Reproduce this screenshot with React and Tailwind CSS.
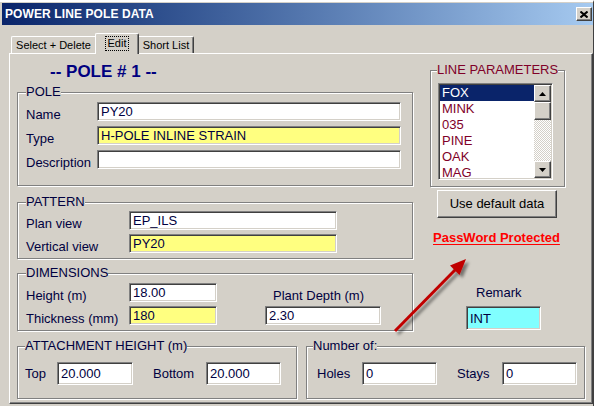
import React from 'react';

const SUNKEN =
  'border border-t-[#808080] border-l-[#808080] border-r-white border-b-white shadow-[inset_1px_1px_0_#404040,inset_-1px_-1px_0_#d4d0c8]';
const RAISED =
  'border border-t-white border-l-white border-r-[#404040] border-b-[#404040] shadow-[inset_-1px_-1px_0_#808080,inset_1px_1px_0_#d4d0c8]';

function Field({ value, w, h = 'h-[19px]', bg = 'bg-white' }) {
  return (
    <div
      className={`${w} ${h} ${bg} ${SUNKEN} box-border pl-[3px] text-[13px] leading-[15px] text-[#000040] whitespace-nowrap overflow-hidden flex items-center`}
    >
      {value}
    </div>
  );
}

function Group({ title, className, legend = 'text-[#000040]', children }) {
  return (
    <fieldset
      className={`box-border border border-[#808080] shadow-[inset_1px_1px_0_#fff,1px_1px_0_#fff] ${className}`}
    >
      <legend className={`bg-[#d4d0c8] text-[13px] leading-[14px] ${legend}`}>{title}</legend>
      {children}
    </fieldset>
  );
}

function Label({ children, w }) {
  return <div className={`${w} shrink-0 text-[13px] leading-[15px] text-[#000040] pt-[5px]`}>{children}</div>;
}

function Arrow({ up }) {
  return (
    <div className={`w-[17px] h-[17px] bg-[#d4d0c8] ${RAISED} box-border flex items-center justify-center`}>
      <svg width="7" height="4" viewBox="0 0 7 4">
        {up ? <polygon points="3.5,0 7,4 0,4" fill="#000" /> : <polygon points="0,0 7,0 3.5,4" fill="#000" />}
      </svg>
    </div>
  );
}

const LINES = ['FOX', 'MINK', '035', 'PINE', 'OAK', 'MAG'];

export default function App() {
  return (
    <div className="relative w-[594px] h-[406px] overflow-hidden bg-[#d4d0c8] font-['Liberation_Sans',Arial,sans-serif] border-t-2 border-t-white border-r border-r-[#404040] box-border">
      {/* title bar */}
      <div className="ml-[2px] mt-[1px] h-[22px] flex items-center justify-between bg-linear-to-r from-[#0a246a] to-[#a6caf0]">
        <span className="pl-[3px] text-[12px] font-bold text-white tracking-[0.1px]">POWER LINE POLE DATA</span>
        <div className={`mr-[1px] w-[16px] h-[14px] bg-[#d4d0c8] ${RAISED} box-border flex items-center justify-center`}>
          <svg width="8" height="7" viewBox="0 0 8 7">
            <path d="M0.5 0.5 L7.5 6.5 M7.5 0.5 L0.5 6.5" stroke="#000" strokeWidth="2" />
          </svg>
        </div>
      </div>

      {/* tabs */}
      <div className="h-[28px] flex items-end pl-[11px] text-[11px] text-black">
        <div className="w-[84px] h-[17px] box-border border-t border-l border-t-white border-l-white rounded-tl-[2px] flex items-center justify-center">
          Select + Delete
        </div>
        <div className="relative z-10 w-[44px] h-[21px] -mb-[1px] box-border border-t border-l border-r border-t-white border-l-white border-r-[#404040] rounded-t-[2px] bg-[#d4d0c8] shadow-[inset_-1px_0_0_#808080] flex items-start justify-center pt-[2px]">
          <span className="px-[2px] h-[15px] leading-[13px] border border-dotted border-black">Edit</span>
        </div>
        <div className="w-[55px] h-[17px] box-border border-t border-r border-t-white border-r-[#404040] rounded-tr-[2px] shadow-[inset_-1px_0_0_#808080] flex items-center justify-center">
          Short List
        </div>
      </div>

      {/* panel */}
      <div className="ml-[9px] w-[584px] h-[351px] box-border border-t border-l border-t-white border-l-white border-r border-b border-r-[#404040] border-b-[#404040] shadow-[inset_-1px_-1px_0_#808080] pl-[7px]">
        <div className="flex">
          {/* left column */}
          <div className="w-[396px]">
            <div className="mt-[8px] h-[20px] leading-[20px] pl-[33px] text-[17px] font-bold text-[#000080]">-- POLE # 1 --</div>

            <Group title="POLE" className="mt-[3px] h-[101px] pl-[8px]">
              <div className="pt-[3px] flex flex-col gap-[5px]">
                {[
                  ['Name', 'PY20', 'bg-white'],
                  ['Type', 'H-POLE INLINE STRAIN', 'bg-[#ffff80]'],
                  ['Description', '', 'bg-white'],
                ].map(([l, v, bg]) => (
                  <div key={l} className="flex h-[19px]">
                    <Label w="w-[71px]">{l}</Label>
                    <Field value={v} w="w-[304px]" bg={bg} />
                  </div>
                ))}
              </div>
            </Group>

            <Group title="PATTERN" className="mt-[9px] h-[64px] pl-[8px]">
              <div className="pt-[2px] flex flex-col gap-[4px]">
                <div className="flex h-[19px]">
                  <Label w="w-[103px]">Plan view</Label>
                  <Field value="EP_ILS" w="w-[208px]" />
                </div>
                <div className="flex h-[19px]">
                  <Label w="w-[103px]">Vertical view</Label>
                  <Field value="PY20" w="w-[208px]" bg="bg-[#ffff80]" />
                </div>
              </div>
            </Group>

            <Group title="DIMENSIONS" className="mt-[7px] h-[65px] pl-[8px]">
              <div className="pt-[3px] flex">
                <div className="flex flex-col gap-[4px]">
                  <div className="flex h-[19px]">
                    <Label w="w-[103px]">Height (m)</Label>
                    <Field value="18.00" w="w-[88px]" />
                  </div>
                  <div className="flex h-[19px]">
                    <Label w="w-[103px]">Thickness (mm)</Label>
                    <Field value="180" w="w-[88px]" bg="bg-[#ffff80]" />
                  </div>
                </div>
                <div className="ml-[48px] flex flex-col gap-[4px]">
                  <div className="h-[19px] pl-[8px]">
                    <Label w="w-[110px]">Plant Depth (m)</Label>
                  </div>
                  <Field value="2.30" w="w-[116px]" />
                </div>
              </div>
            </Group>
          </div>

          {/* right column */}
          <div className="ml-[17px] w-[135px]">
            <Group title="LINE PARAMETERS" className="mt-[9px] h-[124px] pl-[7px]" legend="text-[#800028] -ml-[1px]">
              <div className="pt-[6px]">
                <div className={`w-[115px] h-[97px] box-border ${SUNKEN} bg-white flex`}>
                  <div className="flex-1 pt-px pl-px overflow-hidden">
                    {LINES.map((l, i) => (
                      <div
                        key={l}
                        className={`h-[16px] leading-[16px] pl-[2px] text-[13px] ${i === 0 ? 'bg-[#0a246a] text-white' : 'text-[#800028]'}`}
                      >
                        {l}
                      </div>
                    ))}
                  </div>
                  <div className="w-[17px] my-px mr-px flex flex-col bg-[image:repeating-conic-gradient(#d4d0c8_0_25%,#fff_0_50%)] bg-size-[2px_2px]">
                    <Arrow up />
                    <div className={`h-[18px] bg-[#d4d0c8] ${RAISED} box-border`} />
                    <div className="flex-1" />
                    <Arrow />
                  </div>
                </div>
              </div>
            </Group>

            <div className={`mt-[3px] ml-[7px] w-[120px] h-[28px] box-border ${RAISED} flex items-center justify-center text-[13px] text-black`}>
              Use default data
            </div>

            <div className="mt-[12px] ml-[3px] h-[16px] leading-[16px] text-[13px] font-bold text-[#ff0000] underline underline-offset-[2px]">
              PassWord Protected
            </div>

            <div className="mt-[39px] ml-[46px] h-[16px] leading-[16px] text-[13px] text-[#000040]">Remark</div>
            <div className="mt-[5px] ml-[36px]">
              <Field value="INT" w="w-[75px]" h="h-[24px]" bg="bg-[#80ffff]" />
            </div>
          </div>
        </div>

        {/* bottom row */}
        <div className="mt-[8px] flex">
          <Group title="ATTACHMENT HEIGHT (m)" className="w-[280px] h-[60px] pl-[7px]">
            <div className="pt-[9px] flex items-center h-[32px]">
              <div className="w-[32px] text-[13px] text-[#000040]">Top</div>
              <Field value="20.000" w="w-[76px]" h="h-[23px]" />
              <div className="ml-[20px] w-[53px] text-[13px] text-[#000040]">Bottom</div>
              <Field value="20.000" w="w-[75px]" h="h-[23px]" />
            </div>
          </Group>
          <Group title="Number of:" className="ml-[9px] w-[279px] h-[60px] pl-[6px]">
            <div className="pt-[9px] flex items-center h-[32px]">
              <div className="ml-[4px] w-[45px] text-[13px] text-[#000040]">Holes</div>
              <Field value="0" w="w-[75px]" h="h-[23px]" />
              <div className="ml-[20px] w-[45px] text-[13px] text-[#000040]">Stays</div>
              <Field value="0" w="w-[75px]" h="h-[23px]" />
            </div>
          </Group>
        </div>
      </div>

      {/* annotation arrow */}
      <svg className="absolute left-0 top-0 pointer-events-none" width="594" height="406">
        <defs>
          <filter id="sh" x="-20%" y="-20%" width="140%" height="140%">
            <feDropShadow dx="3" dy="3" stdDeviation="1.5" floodColor="#000" floodOpacity="0.45" />
          </filter>
        </defs>
        <g filter="url(#sh)">
          <line x1="395" y1="329" x2="456" y2="267" stroke="#c00000" strokeWidth="3" />
          <polygon points="466,257 459.5,273 450,263.5" fill="#c00000" />
        </g>
      </svg>
    </div>
  );
}
